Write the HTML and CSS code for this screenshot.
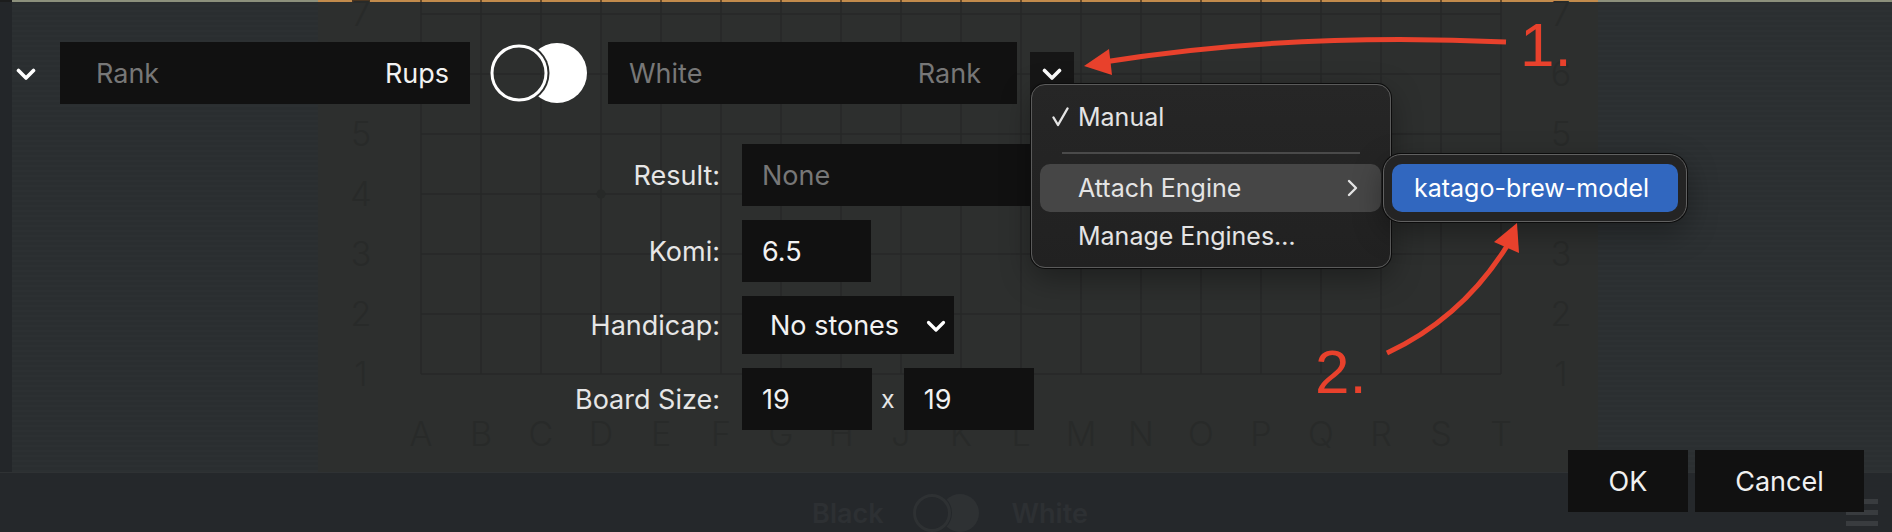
FILE: index.html
```html
<!DOCTYPE html>
<html lang="en">
<head>
<meta charset="utf-8">
<title>New Game</title>
<link rel="stylesheet" href="styles.css">
</head>
<body>
<div class="scene">
  <div class="main">
    <div class="edge"></div>
    <div class="left-panel"></div>
    <div class="board">
      <svg width="1280" height="472" viewBox="0 0 1280 472">
        <rect x="0" y="0" width="1280" height="472" fill="#2d2f2e"/>
        <rect x="0" y="0" width="1280" height="2" fill="#c28b4c"/>
        <path d="M103 0V2M163 0V2M223 0V2M283 0V2M343 0V2M403 0V2M463 0V2M523 0V2M583 0V2M643 0V2M703 0V2M763 0V2M823 0V2M883 0V2M943 0V2M1003 0V2M1063 0V2M1123 0V2M1183 0V2" stroke="#6a4a26" stroke-width="2"/>
        <rect x="34" y="0" width="18" height="2" fill="#4a3520"/>
        <path d="M103 2V374M163 2V374M223 2V374M283 2V374M343 2V374M403 2V374M463 2V374M523 2V374M583 2V374M643 2V374M703 2V374M763 2V374M823 2V374M883 2V374M943 2V374M1003 2V374M1063 2V374M1123 2V374M1183 2V374M103 14H1183M103 74H1183M103 134H1183M103 194H1183M103 254H1183M103 314H1183M103 374H1183" stroke="#272928" stroke-width="1.5" fill="none"/>
        <g fill="#272928">
          <circle cx="283" cy="194" r="4.5"/><circle cx="703" cy="194" r="4.5"/><circle cx="1063" cy="194" r="4.5"/>
        </g>
        <g class="coords" fill="#282a29" text-anchor="middle">
          <text x="43" y="26">7</text><text x="43" y="86">6</text><text x="43" y="146">5</text><text x="43" y="206">4</text><text x="43" y="266">3</text><text x="43" y="326">2</text><text x="43" y="386">1</text>
          <text x="1243" y="26">7</text><text x="1243" y="86">6</text><text x="1243" y="146">5</text><text x="1243" y="206">4</text><text x="1243" y="266">3</text><text x="1243" y="326">2</text><text x="1243" y="386">1</text>
          <text x="103" y="446">A</text><text x="163" y="446">B</text><text x="223" y="446">C</text><text x="283" y="446">D</text><text x="343" y="446">E</text><text x="403" y="446">F</text><text x="463" y="446">G</text><text x="523" y="446">H</text><text x="583" y="446">J</text><text x="643" y="446">K</text><text x="703" y="446">L</text><text x="763" y="446">M</text><text x="823" y="446">N</text><text x="883" y="446">O</text><text x="943" y="446">P</text><text x="1003" y="446">Q</text><text x="1063" y="446">R</text><text x="1123" y="446">S</text><text x="1183" y="446">T</text>
        </g>
      </svg>
    </div>
    <div class="right-panel"></div>
  </div>
  <div class="bottom">
    <div></div>
    <div class="turn">
      <span>Black</span>
      <svg class="mini-toggle" width="70" height="40" viewBox="0 0 70 40">
        <defs><mask id="mm"><rect width="70" height="40" fill="#fff"/><circle cx="19" cy="20" r="20" fill="#000"/></mask></defs>
        <circle cx="47" cy="20" r="19" fill="#2e3133" mask="url(#mm)"/>
        <circle cx="19" cy="20" r="17.5" fill="none" stroke="#2e3133" stroke-width="3"/>
      </svg>
      <span>White</span>
    </div>
    <div class="burger"><i></i><i></i><i></i></div>
  </div>
</div>

<div class="dialog">
  <div class="players">
    <svg class="chev" width="20" height="13" viewBox="0 0 20 13"><path d="M2.5 2.5L10 10L17.5 2.5" fill="none" stroke="#fff" stroke-width="3.6" stroke-linecap="round" stroke-linejoin="round"/></svg>
    <div class="field player black-player"><span class="ph">Rank</span><span class="val">Rups</span></div>
    <svg class="toggle" width="100" height="62" viewBox="0 0 100 62">
      <defs><mask id="tm"><rect width="100" height="62" fill="#fff"/><circle cx="30" cy="31" r="30.5" fill="#000"/></mask></defs>
      <circle cx="68" cy="31" r="30" fill="#fff" mask="url(#tm)"/>
      <circle cx="30" cy="31" r="27" fill="none" stroke="#fff" stroke-width="3"/>
    </svg>
    <div class="field player white-player"><span class="ph">White</span><span class="ph">Rank</span></div>
    <div class="chev-btn"><svg width="20" height="13" viewBox="0 0 20 13"><path d="M2.5 2.5L10 10L17.5 2.5" fill="none" stroke="#fff" stroke-width="3.6" stroke-linecap="round" stroke-linejoin="round"/></svg></div>
  </div>

  <div class="form">
    <div class="label">Result:</div>
    <div class="field result"><span class="ph">None</span></div>
    <div class="label">Komi:</div>
    <div class="field komi">6.5</div>
    <div class="label">Handicap:</div>
    <div class="field handicap"><span>No stones</span><svg width="20" height="13" viewBox="0 0 20 13"><path d="M2.5 2.5L10 10L17.5 2.5" fill="none" stroke="#fff" stroke-width="3.2" stroke-linecap="round" stroke-linejoin="round"/></svg></div>
    <div class="label">Board Size:</div>
    <div class="size">
      <div class="field size-f">19</div>
      <span class="times">x</span>
      <div class="field size-f">19</div>
    </div>
  </div>

  <div class="actions">
    <button class="btn ok">OK</button>
    <button class="btn cancel">Cancel</button>
  </div>
</div>

<div class="menu">
  <div class="menu-item checked">
    <svg class="check" width="17" height="20" viewBox="0 0 17 20"><path d="M1.5 10.5L6 18L15.5 1.5" fill="none" stroke="#e4e4e4" stroke-width="2.4" stroke-linecap="round" stroke-linejoin="round"/></svg>
    <span>Manual</span>
  </div>
  <div class="menu-sep"></div>
  <div class="menu-item active">
    <span>Attach Engine</span>
    <svg class="sub-arrow" width="13" height="18" viewBox="0 0 13 18"><path d="M3 2L10 9L3 16" fill="none" stroke="#e4e4e4" stroke-width="2.4" stroke-linecap="round" stroke-linejoin="round"/></svg>
  </div>
  <div class="menu-item">
    <span>Manage Engines…</span>
  </div>
</div>

<div class="submenu">
  <div class="sub-item">katago-brew-model</div>
</div>

<svg class="annot" width="1892" height="532" viewBox="0 0 1892 532">
  <path d="M1506 42Q1290 32 1104 62" fill="none" stroke="#e8412c" stroke-width="5"/>
  <polygon points="1084,66 1109,49 1112,75" fill="#e8412c"/>
  <path d="M1387 353Q1462 318 1507 246" fill="none" stroke="#e8412c" stroke-width="5"/>
  <polygon points="1517,223 1494,242 1519,253" fill="#e8412c"/>
  <text x="1520" y="66" class="annot-text">1.</text>
  <text x="1315" y="393" class="annot-text">2.</text>
</svg>
</body>
</html>
```

FILE: styles.css
```css
* { box-sizing: border-box; margin: 0; padding: 0; }

html, body {
  width: 1892px;
  height: 532px;
  overflow: hidden;
}

body {
  position: relative;
  background: #2b2e30;
  font-family: Inter, "Noto Sans", "DejaVu Sans", sans-serif;
  color: #ececec;
}

/* ---------- dimmed app behind the dialog ---------- */
.scene {
  display: flex;
  flex-direction: column;
  width: 1892px;
  height: 532px;
}

.main {
  display: flex;
  height: 472px;
}

.edge {
  width: 12px;
  background: #232629;
  border-top: 2px solid #1c1d1d;
}

.left-panel {
  width: 306px;
  border-top: 2px solid #8c907c;
  background:
    repeating-linear-gradient(180deg, #2a2e30 0 3px, #2c3032 3px 5px);
}

.board {
  width: 1280px;
}

.board svg {
  display: block;
}

.coords text {
  font-family: Inter, "Noto Sans", sans-serif;
  font-weight: 300;
  font-size: 34px;
}

.right-panel {
  flex: 1;
  border-top: 2px solid #8c907c;
  background:
    repeating-linear-gradient(180deg, #2b2f31 0 3px, #2d3133 3px 5px);
}

.bottom {
  height: 60px;
  background: #25282b;
  border-top: 1px solid #2f3234;
  display: grid;
  grid-template-columns: 1fr auto 1fr;
  align-items: center;
}

.turn {
  display: flex;
  align-items: center;
  gap: 31px;
  padding-left: 8px;
  padding-top: 20px;
  font-size: 27px;
  font-weight: 600;
  color: #2d3033;
}

.mini-toggle {
  display: block;
  margin: 0 -2px;
}

.burger {
  justify-self: end;
  align-self: end;
  margin: 0 14px 7px 0;
  display: flex;
  flex-direction: column;
  gap: 6px;
}

.burger i {
  display: block;
  width: 32px;
  height: 5px;
  background: #393c3f;
}

/* ---------- dialog ---------- */
.dialog {
  position: absolute;
  inset: 0;
  padding-top: 42px;
  font-size: 27px;
}

.players {
  display: flex;
  align-items: center;
  height: 62px;
  padding-left: 16px;
}

.chev {
  display: block;
  margin-right: 24px;
  margin-top: 2px;
}

.field {
  background: #111111;
  height: 62px;
  display: flex;
  align-items: center;
  color: #f2f2f2;
}

.ph {
  color: #777777;
}

.player {
  justify-content: space-between;
}

.black-player {
  width: 410px;
  padding: 0 21px 0 36px;
}

.white-player {
  width: 409px;
  padding: 0 36px 0 21px;
}

.val {
  color: #f2f2f2;
}

.toggle {
  display: block;
  margin: 0 19px;
}

.chev-btn {
  margin-left: 13px;
  width: 44px;
  height: 43px;
  background: #161616;
  display: flex;
  align-items: center;
  justify-content: center;
}

.chev-btn svg {
  display: block;
  margin-top: 2px;
}

.form {
  display: grid;
  grid-template-columns: 720px auto;
  column-gap: 22px;
  row-gap: 14px;
  margin-top: 40px;
  align-items: center;
}

.label {
  text-align: right;
  color: #e6e6e6;
}

.field.result {
  width: 300px;
  padding-left: 20px;
}

.field.komi {
  width: 129px;
  padding-left: 20px;
}

.field.handicap {
  width: 212px;
  height: 58px;
  padding: 0 8px 0 28px;
  justify-content: space-between;
}

.field.handicap svg {
  display: block;
  margin-top: 2px;
}

.size {
  display: flex;
  align-items: center;
  gap: 9px;
}

.size-f {
  width: 130px;
  padding-left: 20px;
}

.times {
  color: #e6e6e6;
  font-size: 25px;
}

.actions {
  display: flex;
  justify-content: flex-end;
  gap: 7px;
  padding-right: 28px;
  margin-top: 20px;
}

.btn {
  height: 62px;
  background: #111111;
  border: none;
  color: #f0f0f0;
  font-family: inherit;
  font-size: 27px;
}

.btn.ok { width: 120px; }
.btn.cancel { width: 169px; }

/* ---------- popup menus ---------- */
.menu {
  position: absolute;
  left: 1031px;
  top: 84px;
  width: 360px;
  height: 184px;
  border-radius: 14px;
  background: linear-gradient(180deg, #262626, #212121);
  border: 1px solid #5b5b5b;
  box-shadow: 0 0 0 1px #0c0c0c, 0 10px 30px rgba(0, 0, 0, 0.35);
  padding: 8px 9px 7px 8px;
  font-size: 25px;
  color: #e4e4e4;
}

.menu-item {
  height: 48px;
  display: flex;
  align-items: center;
  padding-left: 38px;
  border-radius: 10px;
}

.menu-item.checked {
  padding-left: 12px;
}

.check {
  display: block;
  margin-right: 9px;
}

.menu-item.active {
  background: #464646;
}

.sub-arrow {
  display: block;
  margin-left: auto;
  margin-right: 22px;
}

.menu-sep {
  height: 2px;
  margin: 11px 21px 10px 22px;
  background: #4a4a4a;
}

.submenu {
  position: absolute;
  left: 1383px;
  top: 154px;
  width: 304px;
  height: 68px;
  border-radius: 18px;
  background: #242424;
  border: 1px solid #616161;
  box-shadow: 0 0 0 1px #0c0c0c, 0 10px 30px rgba(0, 0, 0, 0.35);
  padding: 9px 8px;
}

.sub-item {
  height: 48px;
  border-radius: 10px;
  background: #3167bf;
  color: #ffffff;
  font-size: 25px;
  display: flex;
  align-items: center;
  padding-left: 22px;
}

/* ---------- annotations ---------- */
.annot {
  position: absolute;
  left: 0;
  top: 0;
  pointer-events: none;
}

.annot-text {
  font-family: "Liberation Sans", Arial, sans-serif;
  font-size: 62px;
  fill: #e8412c;
}
```
